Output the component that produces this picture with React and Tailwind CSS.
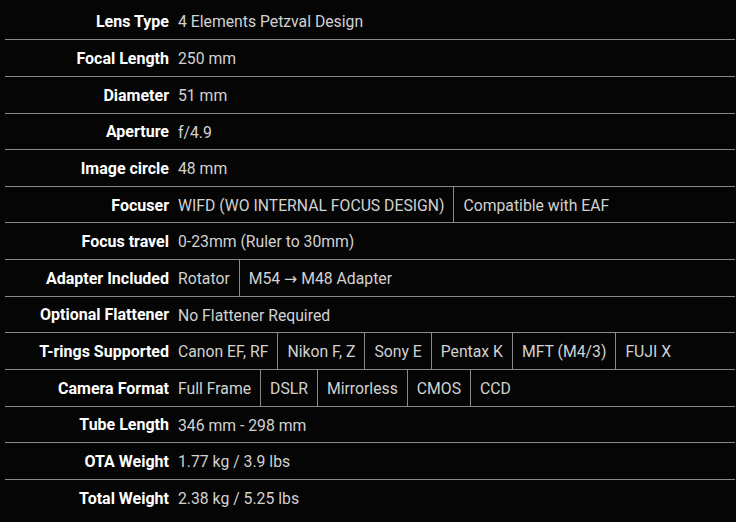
const specs = [
  { label: "Lens Type", values: ["4 Elements Petzval Design"] },
  { label: "Focal Length", values: ["250 mm"] },
  { label: "Diameter", values: ["51 mm"] },
  { label: "Aperture", values: ["f/4.9"] },
  { label: "Image circle", values: ["48 mm"] },
  { label: "Focuser", values: ["WIFD (WO INTERNAL FOCUS DESIGN)", "Compatible with EAF"] },
  { label: "Focus travel", values: ["0-23mm (Ruler to 30mm)"] },
  { label: "Adapter Included", values: ["Rotator", "M54 → M48 Adapter"] },
  { label: "Optional Flattener", values: ["No Flattener Required"] },
  { label: "T-rings Supported", values: ["Canon EF, RF", "Nikon F, Z", "Sony E", "Pentax K", "MFT (M4/3)", "FUJI X"] },
  { label: "Camera Format", values: ["Full Frame", "DSLR", "Mirrorless", "CMOS", "CCD"] },
  { label: "Tube Length", values: ["346 mm - 298 mm"] },
  { label: "OTA Weight", values: ["1.77 kg / 3.9 lbs"] },
  { label: "Total Weight", values: ["2.38 kg / 5.25 lbs"] },
];

function SpecRow({ label, values, first }) {
  return (
    <div
      className={
        "flex h-[36.64px] items-stretch " +
        (first ? "" : "border-t border-[#8a8a8a]")
      }
    >
      <div className="flex w-[164px] shrink-0 items-center justify-end pt-[2px] text-[16px] font-bold text-white">
        {label}
      </div>
      <div className="flex items-stretch">
        {values.map((v, i) => (
          <div
            key={v}
            className={
              "flex items-center px-[9px] pt-[2px] text-[15.75px] text-[#d2d2d2] " +
              (i > 0 ? "border-l border-[#8a8a8a]" : "")
            }
          >
            {v}
          </div>
        ))}
      </div>
    </div>
  );
}

export default function App() {
  return (
    <div className="h-[522px] w-[736px] bg-[#050505] pt-[2.66px] font-['Roboto','DejaVu_Sans',sans-serif]">
      <div className="ml-[5px] w-[730px]">
        {specs.map((s, i) => (
          <SpecRow key={s.label} label={s.label} values={s.values} first={i === 0} />
        ))}
      </div>
    </div>
  );
}
